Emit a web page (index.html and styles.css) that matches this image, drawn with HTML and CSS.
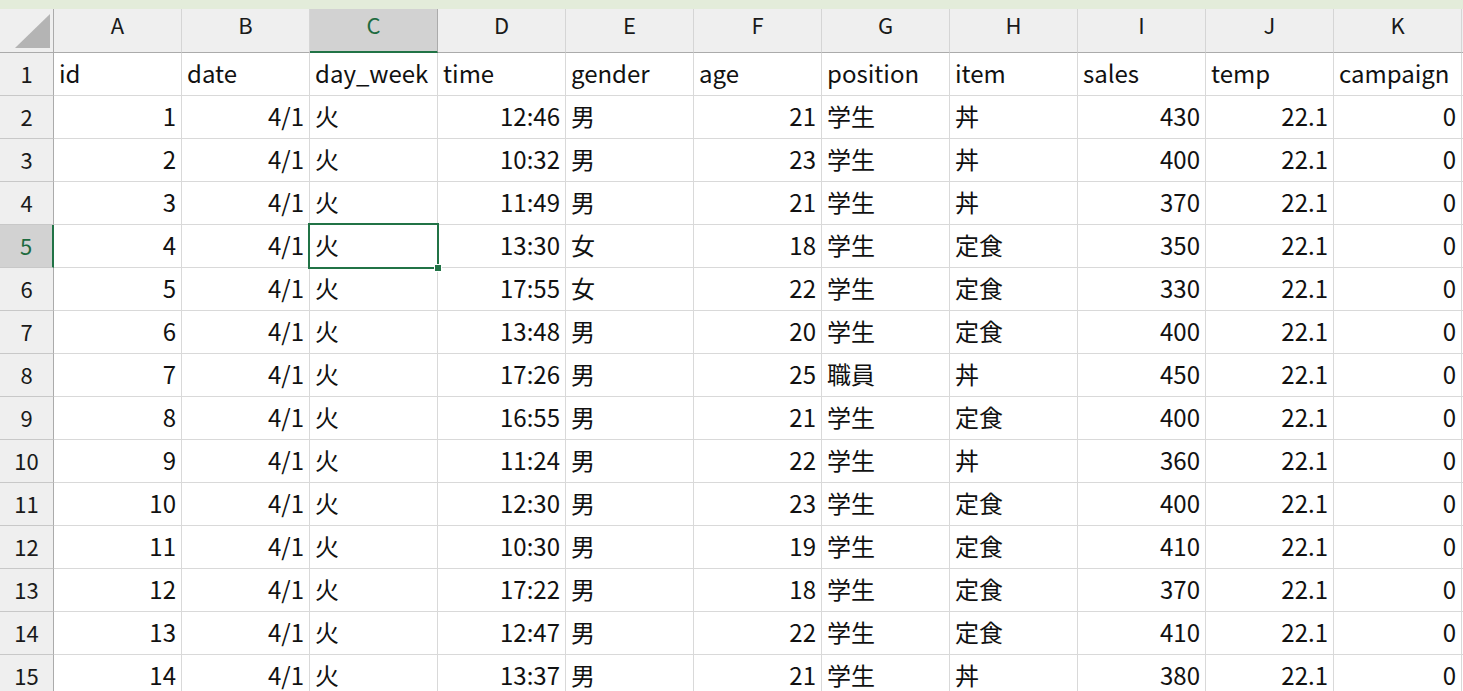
FILE: index.html
```html
<!DOCTYPE html>
<html lang="ja">
<head>
<meta charset="utf-8">
<link rel="stylesheet" href="styles.css">
</head>
<body>
<div class="topbar"></div>
<div class="sheet" id="sheet">
  <div class="corner"><div class="tri"></div></div>
  <div class="ch">A</div><div class="ch">B</div><div class="ch ch-sel">C</div><div class="ch">D</div><div class="ch">E</div><div class="ch">F</div><div class="ch">G</div><div class="ch">H</div><div class="ch">I</div><div class="ch">J</div><div class="ch">K</div><div class="ch ch-end"></div>

  <div class="rh">1</div><div class="c">id</div><div class="c">date</div><div class="c">day_week</div><div class="c">time</div><div class="c">gender</div><div class="c">age</div><div class="c">position</div><div class="c">item</div><div class="c">sales</div><div class="c">temp</div><div class="c">campaign</div><div class="c end"></div>

  <div class="rh">2</div><div class="c n">1</div><div class="c n">4/1</div><div class="c">火</div><div class="c n">12:46</div><div class="c">男</div><div class="c n">21</div><div class="c">学生</div><div class="c">丼</div><div class="c n">430</div><div class="c n">22.1</div><div class="c n">0</div><div class="c end"></div>
  <div class="rh">3</div><div class="c n">2</div><div class="c n">4/1</div><div class="c">火</div><div class="c n">10:32</div><div class="c">男</div><div class="c n">23</div><div class="c">学生</div><div class="c">丼</div><div class="c n">400</div><div class="c n">22.1</div><div class="c n">0</div><div class="c end"></div>
  <div class="rh">4</div><div class="c n">3</div><div class="c n">4/1</div><div class="c">火</div><div class="c n">11:49</div><div class="c">男</div><div class="c n">21</div><div class="c">学生</div><div class="c">丼</div><div class="c n">370</div><div class="c n">22.1</div><div class="c n">0</div><div class="c end"></div>
  <div class="rh rh-sel">5</div><div class="c n">4</div><div class="c n">4/1</div><div class="c sel">火<span class="handle"></span></div><div class="c n">13:30</div><div class="c">女</div><div class="c n">18</div><div class="c">学生</div><div class="c">定食</div><div class="c n">350</div><div class="c n">22.1</div><div class="c n">0</div><div class="c end"></div>
  <div class="rh">6</div><div class="c n">5</div><div class="c n">4/1</div><div class="c">火</div><div class="c n">17:55</div><div class="c">女</div><div class="c n">22</div><div class="c">学生</div><div class="c">定食</div><div class="c n">330</div><div class="c n">22.1</div><div class="c n">0</div><div class="c end"></div>
  <div class="rh">7</div><div class="c n">6</div><div class="c n">4/1</div><div class="c">火</div><div class="c n">13:48</div><div class="c">男</div><div class="c n">20</div><div class="c">学生</div><div class="c">定食</div><div class="c n">400</div><div class="c n">22.1</div><div class="c n">0</div><div class="c end"></div>
  <div class="rh">8</div><div class="c n">7</div><div class="c n">4/1</div><div class="c">火</div><div class="c n">17:26</div><div class="c">男</div><div class="c n">25</div><div class="c">職員</div><div class="c">丼</div><div class="c n">450</div><div class="c n">22.1</div><div class="c n">0</div><div class="c end"></div>
  <div class="rh">9</div><div class="c n">8</div><div class="c n">4/1</div><div class="c">火</div><div class="c n">16:55</div><div class="c">男</div><div class="c n">21</div><div class="c">学生</div><div class="c">定食</div><div class="c n">400</div><div class="c n">22.1</div><div class="c n">0</div><div class="c end"></div>
  <div class="rh">10</div><div class="c n">9</div><div class="c n">4/1</div><div class="c">火</div><div class="c n">11:24</div><div class="c">男</div><div class="c n">22</div><div class="c">学生</div><div class="c">丼</div><div class="c n">360</div><div class="c n">22.1</div><div class="c n">0</div><div class="c end"></div>
  <div class="rh">11</div><div class="c n">10</div><div class="c n">4/1</div><div class="c">火</div><div class="c n">12:30</div><div class="c">男</div><div class="c n">23</div><div class="c">学生</div><div class="c">定食</div><div class="c n">400</div><div class="c n">22.1</div><div class="c n">0</div><div class="c end"></div>
  <div class="rh">12</div><div class="c n">11</div><div class="c n">4/1</div><div class="c">火</div><div class="c n">10:30</div><div class="c">男</div><div class="c n">19</div><div class="c">学生</div><div class="c">定食</div><div class="c n">410</div><div class="c n">22.1</div><div class="c n">0</div><div class="c end"></div>
  <div class="rh">13</div><div class="c n">12</div><div class="c n">4/1</div><div class="c">火</div><div class="c n">17:22</div><div class="c">男</div><div class="c n">18</div><div class="c">学生</div><div class="c">定食</div><div class="c n">370</div><div class="c n">22.1</div><div class="c n">0</div><div class="c end"></div>
  <div class="rh">14</div><div class="c n">13</div><div class="c n">4/1</div><div class="c">火</div><div class="c n">12:47</div><div class="c">男</div><div class="c n">22</div><div class="c">学生</div><div class="c">定食</div><div class="c n">410</div><div class="c n">22.1</div><div class="c n">0</div><div class="c end"></div>
  <div class="rh">15</div><div class="c n">14</div><div class="c n">4/1</div><div class="c">火</div><div class="c n">13:37</div><div class="c">男</div><div class="c n">21</div><div class="c">学生</div><div class="c">丼</div><div class="c n">380</div><div class="c n">22.1</div><div class="c n">0</div><div class="c end"></div>
</div>
</body>
</html>
```

FILE: styles.css
```css
html, body {
  margin: 0;
  padding: 0;
  background: #ffffff;
  overflow: hidden;
  width: 1463px;
  height: 691px;
}

body {
  font-family: "Noto Sans CJK JP", "Noto Sans", sans-serif;
  color: #000;
}

.topbar {
  height: 9px;
  background: #e3ecda;
}

.sheet {
  display: grid;
  grid-template-columns: 54px repeat(11, 128px) 1fr;
  grid-template-rows: 44px repeat(15, 43px);
}

.corner {
  background: #efefef;
  border-right: 1px solid #ababab;
  border-bottom: 1px solid #ababab;
  box-sizing: border-box;
  position: relative;
}

.tri {
  position: absolute;
  left: 15px;
  top: 5px;
  width: 0;
  height: 0;
  border-left: 35px solid transparent;
  border-bottom: 34px solid #b4b4b4;
}

.ch {
  background: #efefef;
  border-right: 1px solid #d5d5d5;
  border-bottom: 1px solid #ababab;
  box-sizing: border-box;
  display: flex;
  justify-content: center;
  align-items: flex-start;
  padding-top: 0;
  font-size: 22px;
  line-height: 30px;
  color: #1a1a1a;
}

.ch-sel {
  background: #d2d2d2;
  color: #1e6b40;
  border-right-color: #ababab;
  border-bottom: 2px solid #217346;
}

.ch-end {
  border-right: none;
}

.rh {
  background: #efefef;
  border-right: 1px solid #ababab;
  border-bottom: 1px solid #c8c8c8;
  box-sizing: border-box;
  display: flex;
  justify-content: center;
  align-items: center;
  font-size: 22px;
  color: #1a1a1a;
  padding-bottom: 2px;
}

.rh-sel {
  background: #d2d2d2;
  color: #1e6b40;
  border-right: 2px solid #217346;
}

.c {
  border-right: 1px solid #d9d9d9;
  border-bottom: 1px solid #d9d9d9;
  box-sizing: border-box;
  display: flex;
  align-items: center;
  padding: 0 5px 3px 5px;
  font-size: 24px;
  white-space: nowrap;
  overflow: visible;
  color: #111;
}

.c.n {
  justify-content: flex-end;
}

.c.end {
  border-right: none;
}

.c.sel {
  position: relative;
}

.c.sel::after {
  content: "";
  position: absolute;
  left: -2px;
  top: -2px;
  right: -2px;
  bottom: -2px;
  border: 2px solid #217346;
  pointer-events: none;
}

.handle {
  position: absolute;
  right: -4px;
  bottom: -4px;
  width: 6px;
  height: 6px;
  background: #217346;
  z-index: 2;
  box-shadow: 0 0 0 1px #fff;
}
```
